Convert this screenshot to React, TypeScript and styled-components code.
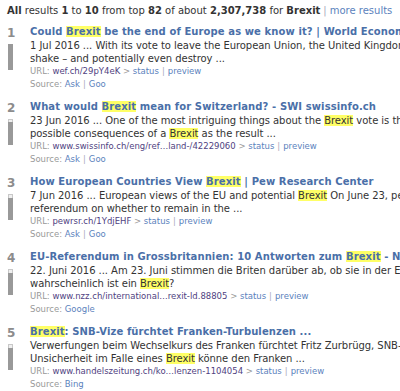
import React from "react";
import styled, { createGlobalStyle } from "styled-components";

const Global = createGlobalStyle`
  html, body { margin: 0; padding: 0; background: #fff; overflow: hidden; }
  body { font-family: "DejaVu Sans", Verdana, sans-serif; color: #333; }
`;

const Page = styled.div`
  width: 400px;
  height: 391px;
  overflow: hidden;
  padding: 4px 0 0 7px;
  box-sizing: border-box;
`;

const Header = styled.div`
  font-size: 10px;
  line-height: 13px;
  white-space: nowrap;
  color: #333;
  b { font-weight: bold; }
`;

const Sep = styled.span`
  color: #aab;
  margin: 0 3px;
`;

const Link = styled.span<{ $tone?: "blue" | "visited" }>`
  color: ${(p) => (p.$tone === "visited" ? "#4f3f7f" : "#5b82bd")};
`;

const List = styled.div`
  display: flex;
  flex-direction: column;
  gap: 9px;
  margin-top: 8px;
`;

const Result = styled.div`
  display: grid;
  grid-template-columns: 23px 1fr;
`;

const Rank = styled.div`
  display: flex;
  flex-direction: column;
  align-items: flex-start;
  padding-top: 2px;
`;

const Num = styled.div`
  font-size: 12px;
  font-weight: bold;
  line-height: 12px;
  color: #8c8c8c;
`;

const Bar = styled.div`
  margin: 5px 0 0 1px;
  width: 5px;
  height: 26px;
  background: #efefef;
  border: 1px solid #c8c8c8;
  box-sizing: border-box;
  display: flex;
  flex-direction: column;
  justify-content: flex-end;
`;

const Fill = styled.div`
  background: #999;
  margin: -1px;
`;

const Body = styled.div`
  white-space: nowrap;
`;

const Title = styled.div`
  font-size: 10px;
  font-weight: bold;
  line-height: 14px;
  letter-spacing: 0.1px;
  color: #4a6fa8;
`;

const Line = styled.div`
  font-size: 10px;
  line-height: 13px;
  letter-spacing: -0.05px;
  color: #333;
`;

const Meta = styled.div`
  font-size: 8.5px;
  line-height: 13px;
  color: #999;
`;

const Hl = styled.span`
  background: #ffff66;
`;

const hl = (text: string) =>
  text.split(/(Brexit)/).map((part, i) =>
    part === "Brexit" ? <Hl key={i}>{part}</Hl> : <React.Fragment key={i}>{part}</React.Fragment>
  );

type R = {
  title: string;
  lines: string[];
  url: string;
  sources: string[];
  score: number;
};

const results: R[] = [
  {
    title: "Could Brexit be the end of Europe as we know it? | World Economic Forum",
    lines: [
      "1 Jul 2016 ... With its vote to leave the European Union, the United Kingdom has",
      "shake – and potentially even destroy ...",
    ],
    url: "wef.ch/29pY4eK",
    sources: ["Ask", "Goo"],
    score: 1,
  },
  {
    title: "What would Brexit mean for Switzerland? - SWI swissinfo.ch",
    lines: [
      "23 Jun 2016 ... One of the most intriguing things about the Brexit vote is the",
      "possible consequences of a Brexit as the result ...",
    ],
    url: "www.swissinfo.ch/eng/ref…land-/42229060",
    sources: ["Ask", "Goo"],
    score: 0.88,
  },
  {
    title: "How European Countries View Brexit | Pew Research Center",
    lines: [
      "7 Jun 2016 ... European views of the EU and potential Brexit On June 23, people",
      "referendum on whether to remain in the ...",
    ],
    url: "pewrsr.ch/1YdjEHF",
    sources: ["Ask", "Goo"],
    score: 0.86,
  },
  {
    title: "EU-Referendum in Grossbritannien: 10 Antworten zum Brexit - NZZ",
    lines: [
      "22. Juni 2016 ... Am 23. Juni stimmen die Briten darüber ab, ob sie in der EU",
      "wahrscheinlich ist ein Brexit?",
    ],
    url: "www.nzz.ch/international…rexit-ld.88805",
    sources: ["Google"],
    score: 0.84,
  },
  {
    title: "Brexit: SNB-Vize fürchtet Franken-Turbulenzen ...",
    lines: [
      "Verwerfungen beim Wechselkurs des Franken fürchtet Fritz Zurbrügg, SNB-Vize",
      "Unsicherheit im Falle eines Brexit könne den Franken ...",
    ],
    url: "www.handelszeitung.ch/ko…lenzen-1104054",
    sources: ["Bing"],
    score: 0.84,
  },
];

export default function App() {
  return (
    <>
      <Global />
      <Page>
        <Header>
          <b>All</b> results <b>1</b> to <b>10</b> from top <b>82</b> of about <b>2,307,738</b> for <b>Brexit</b>
          <Sep>|</Sep>
          <Link>more results</Link>
        </Header>
        <List>
          {results.map((r, i) => (
            <Result key={i}>
              <Rank>
                <Num>{i + 1}</Num>
                <Bar>
                  <Fill style={{ height: `${Math.round(r.score * 26)}px` }} />
                </Bar>
              </Rank>
              <Body>
                <Title>{hl(r.title)}</Title>
                {r.lines.map((l, j) => (
                  <Line key={j}>{hl(l)}</Line>
                ))}
                <Meta>
                  URL: <Link $tone="visited">{r.url}</Link> &gt; <Link>status</Link>
                  <Sep>|</Sep>
                  <Link>preview</Link>
                </Meta>
                <Meta>
                  Source:{" "}
                  {r.sources.map((s, k) => (
                    <React.Fragment key={k}>
                      {k > 0 && <Sep>|</Sep>}
                      <Link>{s}</Link>
                    </React.Fragment>
                  ))}
                </Meta>
              </Body>
            </Result>
          ))}
        </List>
      </Page>
    </>
  );
}
